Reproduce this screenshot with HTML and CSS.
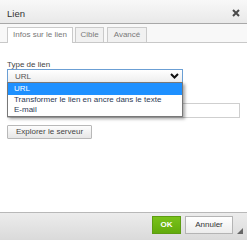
FILE: index.html
```html
<!DOCTYPE html>
<html lang="fr">
<head>
<meta charset="utf-8">
<title>Lien</title>
<link rel="stylesheet" href="styles.css">
</head>
<body>
<div class="dialog">
  <div class="titlebar">
    <span class="title">Lien</span>
    <svg class="close" width="8" height="8" viewBox="0 0 8 8"><path d="M1 1 L7 7 M7 1 L1 7" stroke="#4a4a4a" stroke-width="2" fill="none"/></svg>
  </div>
  <div class="tabs">
    <div class="tab active t1">Infos sur le lien</div>
    <div class="tab t2">Cible</div>
    <div class="tab t3">Avancé</div>
  </div>
  <div class="body">
    <div class="label">Type de lien</div>
    <div class="select">
      <span>URL</span>
      <svg class="chev" width="9" height="6" viewBox="0 0 9 6"><path d="M1 1 L4.5 4.5 L8 1" stroke="#111" stroke-width="2" fill="none"/></svg>
    </div>
    <div class="input"></div>
    <div class="btn">Explorer le serveur</div>
    <div class="dropdown">
      <div class="opt sel">URL</div>
      <div class="opt">Transformer le lien en ancre dans le texte</div>
      <div class="opt">E-mail</div>
    </div>
  </div>
  <div class="footer">
    <div class="ok">OK</div>
    <div class="cancel">Annuler</div>
    <svg class="grip" width="6" height="6" viewBox="0 0 6 6"><path d="M6 0 L6 6 L0 6 Z" fill="#666"/></svg>
  </div>
</div>
</body>
</html>
```
FILE: styles.css
```css
html, body {
  margin: 0;
  padding: 0;
  background: #fff;
}
body {
  font-family: "Liberation Sans", Arial, sans-serif;
  font-size: 8px;
  color: #333;
}
.dialog {
  width: 247px;
  height: 240px;
  display: flex;
  flex-direction: column;
}
.titlebar {
  height: 24px;
  box-sizing: border-box;
  border-bottom: 1px solid #a8a8a8;
  background: linear-gradient(#f8f8f8, #e9e9e9);
  display: flex;
  align-items: center;
  justify-content: space-between;
  padding: 0 7px 0 7px;
}
.title {
  font-size: 9.5px;
  color: #333;
  margin-top: 4px;
}
.close {
  margin-top: 3px;
}
.tabs {
  height: 19px;
  box-sizing: border-box;
  background: #f8f8f8;
  border-bottom: 1px solid #c8c8c8;
  display: flex;
  align-items: flex-end;
  gap: 2px;
  padding: 3px 0 0 7px;
}
.tab {
  height: 15px;
  box-sizing: border-box;
  border: 1px solid #cacaca;
  border-bottom: none;
  background: #f1f1f1;
  color: #7a7a7a;
  line-height: 14px;
  text-align: center;
}
.tab.active {
  background: #fff;
  height: 16px;
  margin-bottom: -1px;
  color: #777;
}
.t1 { width: 66px; }
.t2 { width: 29px; margin-left: 0; }
.t3 { width: 40px; margin-left: 1px; }
.body {
  flex: 1;
  position: relative;
  padding: 17px 7px 0 7px;
  background: #fff;
}
.label {
  line-height: 9px;
  height: 9px;
  color: #444;
}
.select {
  width: 176px;
  height: 14px;
  box-sizing: border-box;
  border: 1px solid #6b9fd4;
  background: linear-gradient(#ffffff, #eeeeee);
  display: flex;
  align-items: center;
  justify-content: space-between;
  padding: 0 3px 0 7px;
  color: #555;
}
.input {
  width: 233px;
  height: 15px;
  box-sizing: border-box;
  border: 1px solid #cfcfcf;
  margin-top: 20px;
  background: #fff;
}
.btn {
  width: 85px;
  height: 14px;
  box-sizing: border-box;
  margin-top: 7px;
  border: 1px solid #b8b8b8;
  border-radius: 1px;
  background: linear-gradient(#fdfdfd, #e6e6e6);
  color: #444;
  line-height: 12px;
  text-align: center;
}
.dropdown {
  position: absolute;
  left: 7px;
  top: 39px;
  width: 176px;
  height: 35px;
  box-sizing: border-box;
  border: 1px solid #787878;
  background: #fff;
  box-shadow: 2px 2px 3px rgba(0, 0, 0, 0.35);
}
.opt {
  height: 10px;
  line-height: 10px;
  padding-left: 6px;
  color: #2d3a55;
}
.opt.sel {
  height: 12px;
  line-height: 12px;
  background: #1e90ff;
  color: #fff;
}
.footer {
  height: 28px;
  box-sizing: border-box;
  border-top: 1px solid #b8b8b8;
  background: linear-gradient(#ececec, #dadada);
  display: flex;
  align-items: flex-start;
  justify-content: flex-end;
  gap: 4px;
  padding: 3px 14px 0 0;
  position: relative;
}
.ok {
  width: 29px;
  height: 18px;
  box-sizing: border-box;
  border: 1px solid #5d9c12;
  background: linear-gradient(#79c21a, #62ab0c);
  color: #fff;
  font-weight: bold;
  line-height: 16px;
  text-align: center;
}
.cancel {
  width: 48px;
  height: 18px;
  box-sizing: border-box;
  border: 1px solid #b4b4b4;
  background: linear-gradient(#ffffff, #ececec);
  color: #333;
  line-height: 16px;
  text-align: center;
}
.grip {
  position: absolute;
  right: 4px;
  bottom: 6px;
}
```
